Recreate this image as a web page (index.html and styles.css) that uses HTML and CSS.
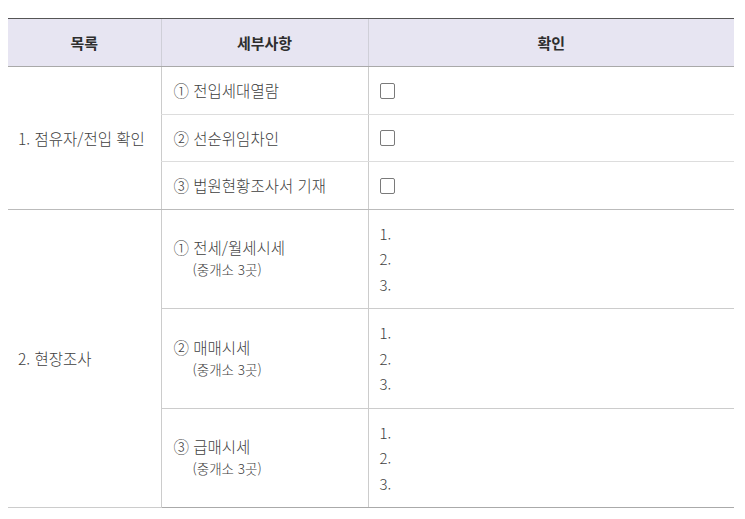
FILE: index.html
```html
<!DOCTYPE html>
<html lang="ko">
<head>
<meta charset="utf-8">
<link rel="stylesheet" href="styles.css">
</head>
<body>
<table class="check-table">
  <colgroup>
    <col class="c1">
    <col class="c2">
    <col class="c3">
  </colgroup>
  <thead>
    <tr class="head-row">
      <th>목록</th>
      <th>세부사항</th>
      <th>확인</th>
    </tr>
  </thead>
  <tbody>
    <tr class="short-row first">
      <td class="cat" rowspan="3">1. 점유자/전입 확인</td>
      <td class="detail">① 전입세대열람</td>
      <td class="confirm"><span class="box"></span></td>
    </tr>
    <tr class="short-row">
      <td class="detail">② 선순위임차인</td>
      <td class="confirm"><span class="box"></span></td>
    </tr>
    <tr class="short-row group-end">
      <td class="detail">③ 법원현황조사서 기재</td>
      <td class="confirm"><span class="box"></span></td>
    </tr>
    <tr class="tall-row">
      <td class="cat" rowspan="3">2. 현장조사</td>
      <td class="detail"><div>① 전세/월세시세</div><div class="sub">(중개소 3곳)</div></td>
      <td class="confirm"><div class="num">1.</div><div class="num">2.</div><div class="num">3.</div></td>
    </tr>
    <tr class="tall-row mid">
      <td class="detail"><div>② 매매시세</div><div class="sub">(중개소 3곳)</div></td>
      <td class="confirm"><div class="num">1.</div><div class="num">2.</div><div class="num">3.</div></td>
    </tr>
    <tr class="tall-row last-row">
      <td class="detail"><div>③ 급매시세</div><div class="sub">(중개소 3곳)</div></td>
      <td class="confirm"><div class="num">1.</div><div class="num">2.</div><div class="num">3.</div></td>
    </tr>
  </tbody>
</table>
</body>
</html>
```
FILE: styles.css
```css
html, body {
  margin: 0;
  background: #ffffff;
}
body {
  padding: 18px 11px 0 8px;
  font-family: "Noto Sans CJK KR", "Noto Sans", sans-serif;
  color: #404040;
}
.check-table {
  width: 726px;
  border-collapse: collapse;
  table-layout: fixed;
  font-size: 15.5px;
  font-weight: 300;
}
.c1 { width: 153px; }
.c2 { width: 207px; }
.c3 { width: 366px; }

.head-row th {
  height: 47px;
  padding: 0;
  background: #e7e5f2;
  border-top: 1px solid #555555;
  border-bottom: 1px solid #a9a9a9;
  border-left: 1px solid #cfcfd8;
  font-weight: 700;
  font-size: 15px;
  color: #2e2e2e;
  text-align: center;
  vertical-align: middle;
}
.head-row th:first-child { border-left: none; }

td {
  padding: 0 0 0 12px;
  border-left: 1px solid #cccccc;
  border-bottom: 1px solid #dddddd;
  vertical-align: middle;
  line-height: 21px;
}
td.cat {
  border-left: none;
  padding-left: 10px;
  border-bottom: 1px solid #bbbbbb;
}
.short-row td { height: 46px; }
.short-row.first td { height: 47px; }
.group-end td { height: 47px; border-bottom: 1px solid #bbbbbb; }
.tall-row td { height: 98px; border-bottom-color: #cccccc; }
.tall-row.mid td { height: 99px; }
.last-row td { border-bottom: 1px solid #aaaaaa; }

.detail .sub {
  padding-left: 19px;
  font-size: 13.5px;
  line-height: 23px;
}
.confirm { padding-left: 11px; }
.box {
  display: block;
  width: 13px;
  height: 14px;
  border: 1px solid #7a7a7a;
  border-radius: 2px;
}
.num {
  font-size: 15px;
  line-height: 25.5px;
}
```
